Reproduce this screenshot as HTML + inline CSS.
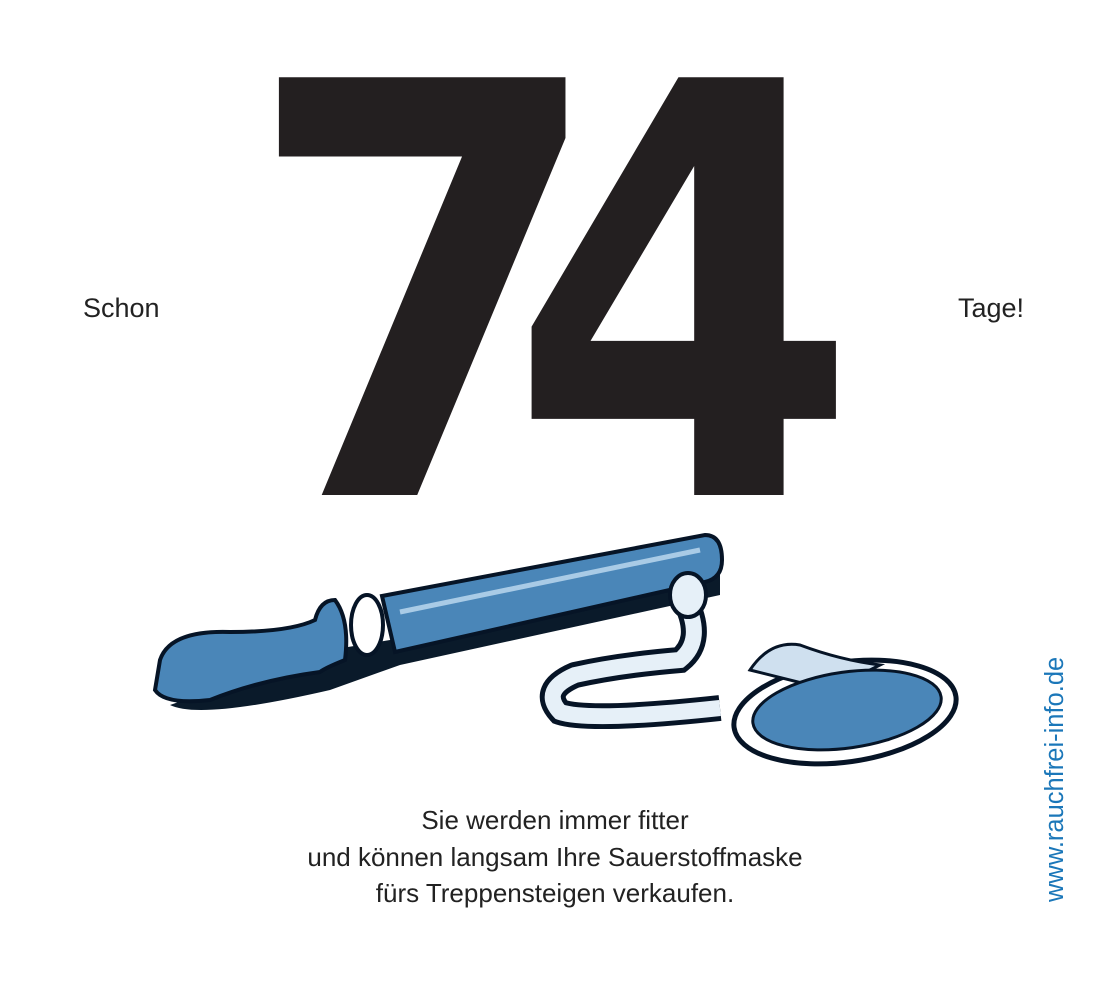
<!DOCTYPE html>
<html><head><meta charset="utf-8"><style>
html,body{margin:0;padding:0;background:#fff}
body{width:1103px;height:985px;position:relative;overflow:hidden;font-family:"Liberation Sans",sans-serif}
.t{position:absolute;font-size:27px;color:#222}
.bot{position:absolute;left:205px;width:700px;text-align:center;font-size:26px;color:#222;line-height:36.5px;top:802px}
.url{position:absolute;left:1041px;top:902px;transform:rotate(-90deg);transform-origin:0 0;font-size:25.5px;color:#1b77b9;white-space:nowrap}
</style></head><body>
<svg width="1103" height="985" style="position:absolute;left:0;top:0">
<text x="244" y="495" font-family="DejaVu Sans" font-weight="bold" font-size="573" fill="#231f20" textLength="363" lengthAdjust="spacingAndGlyphs">7</text>
<text x="509" y="495" font-family="DejaVu Sans" font-weight="bold" font-size="573" fill="#231f20" textLength="350" lengthAdjust="spacingAndGlyphs">4</text>
<!-- shadows -->
<path d="M170 705 Q200 720 330 690 L400 665 L720 595 L720 560 L390 640 L330 650 Z" fill="#0a1a2a"/>
<!-- handle -->
<path d="M160 660 Q170 630 230 632 Q290 632 315 620 Q320 600 335 600 Q350 620 345 660 Q325 668 320 672 Q260 680 210 700 Q165 705 155 690 Z" fill="#4a86b8" stroke="#061426" stroke-width="4"/>
<ellipse cx="367" cy="625" rx="16" ry="30" fill="#fff" stroke="#061426" stroke-width="4"/>
<!-- tube -->
<path d="M382 596 L705 535 Q722 535 722 560 Q722 578 705 582 L395 652 Z" fill="#4a86b8" stroke="#061426" stroke-width="4"/>
<path d="M400 612 L700 550" stroke="#a9cbe6" stroke-width="5" fill="none"/>
<!-- hose -->
<path d="M685 600 Q705 640 680 660 Q620 665 575 675 Q540 690 560 712 Q590 722 720 708" fill="none" stroke="#061426" stroke-width="26"/>
<path d="M685 600 Q705 640 680 660 Q620 665 575 675 Q540 690 560 712 Q590 722 720 708" fill="none" stroke="#e6f0f8" stroke-width="16"/>
<ellipse cx="688" cy="595" rx="18" ry="22" fill="#e6f0f8" stroke="#061426" stroke-width="4"/>
<!-- mask -->
<ellipse cx="845" cy="712" rx="112" ry="50" transform="rotate(-8 845 712)" fill="#fff" stroke="#061426" stroke-width="5"/>
<path d="M750 670 Q770 640 800 645 Q840 660 880 665 L830 690 Z" fill="#cfe0ef" stroke="#061426" stroke-width="3"/>
<ellipse cx="847" cy="710" rx="95" ry="38" transform="rotate(-8 847 710)" fill="#4a86b8" stroke="#061426" stroke-width="3"/>
</svg>
<div class="t" style="left:83px;top:293px">Schon</div>
<div class="t" style="left:958px;top:293px">Tage!</div>
<div class="bot">Sie werden immer fitter<br>und können langsam Ihre Sauerstoffmaske<br>fürs Treppensteigen verkaufen.</div>
<div class="url">www.rauchfrei-info.de</div>
</body></html>
